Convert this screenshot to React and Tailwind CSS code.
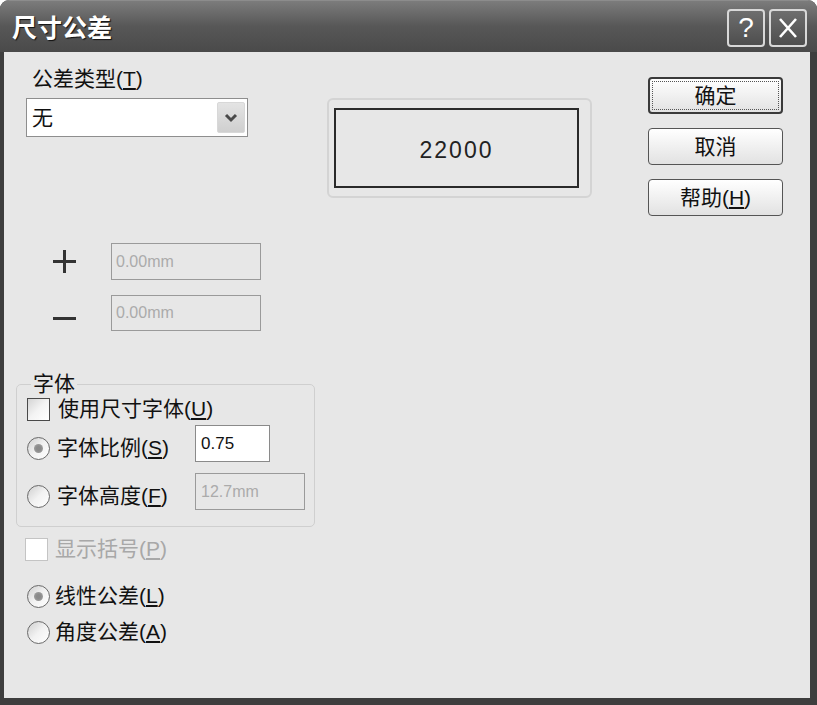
import React from "react";

const FONT = { fontFamily: '"Liberation Sans", "Noto Sans CJK SC", sans-serif' };

function Radio({ checked }) {
  return (
    <span className="flex items-center justify-center w-[23px] h-[23px] rounded-full border border-[#6a6a6a] bg-linear-to-br from-[#cfcfcf] via-[#f2f2f2] to-white shrink-0">
      {checked && <span className="block w-[9px] h-[9px] rounded-full bg-[radial-gradient(circle,#8a8a8a_30%,#a8a8a8_100%)]" />}
    </span>
  );
}

function Check({ disabled }) {
  return (
    <span
      className={
        disabled
          ? "block w-[23px] h-[23px] border border-[#c4c4c4] bg-white shrink-0"
          : "block w-[23px] h-[23px] border border-[#4a4a4a] bg-linear-to-br from-[#d4d4d4] via-[#f4f4f4] to-white shrink-0"
      }
    />
  );
}

function Btn({ children, def }) {
  return (
    <div
      className={
        def
          ? "h-[37px] rounded-[4px] border-2 border-[#3a3a3a] bg-linear-to-b from-white to-[#e2e2e2] p-[2px]"
          : "h-[37px] rounded-[4px] border border-[#555] bg-linear-to-b from-white to-[#e2e2e2] flex items-center justify-center text-[21px] text-[#111]"
      }
    >
      {def ? (
        <div className="h-full border border-dotted border-[#555] flex items-center justify-center text-[21px] text-[#111]">
          {children}
        </div>
      ) : (
        children
      )}
    </div>
  );
}

export default function App() {
  return (
    <div className="w-[817px] h-[705px] bg-white" style={FONT}>
      <div className="flex flex-col h-full rounded-t-[9px] bg-[#3e3e3e] overflow-hidden">
        {/* title bar */}
        <div className="h-[52px] shrink-0 flex items-start bg-linear-to-b from-[#7c7c7c] via-[#575757] to-[#4a4a4a] border-t border-[#8c8c8c]">
          <div className="pl-[12px] pt-[12px] text-[25px] leading-[30px] font-bold text-white [text-shadow:1px_1px_1px_#111]">
            尺寸公差
          </div>
          <div className="ml-auto mr-[10px] mt-[8px] flex gap-[4px]">
            <div className="w-[38px] h-[38px] rounded-[4px] border-2 border-[#d8d8d8] bg-linear-to-b from-[#6e6e6e] to-[#4e4e4e] flex items-center justify-center text-white text-[28px] leading-none">
              ?
            </div>
            <div className="w-[38px] h-[38px] rounded-[4px] border-2 border-[#d8d8d8] bg-linear-to-b from-[#6e6e6e] to-[#4e4e4e] flex items-center justify-center">
              <svg width="20" height="22" viewBox="0 0 20 22">
                <path d="M2 2 L18 20 M18 2 L2 20" stroke="white" strokeWidth="2.6" fill="none" />
              </svg>
            </div>
          </div>
        </div>

        {/* body */}
        <div className="flex-1 ml-[4px] mr-[7px] mb-[7px] bg-[#e7e7e7] flex items-start text-[#111]">
          {/* left column */}
          <div className="ml-[12px] w-[300px] flex flex-col items-start">
            <div className="mt-[15px] ml-[16px] h-[24px] leading-[24px] text-[21px]">
              公差类型(<u>T</u>)
            </div>
            <div className="mt-[7px] ml-[10px] w-[222px] h-[39px] border border-[#8e8e8e] bg-white flex items-center">
              <span className="ml-[5px] text-[21px] leading-[24px]">无</span>
              <span className="ml-auto mr-[2px] w-[28px] h-[31px] rounded-[2px] bg-linear-to-b from-[#e4e4e4] to-[#cfcfcf] border border-[#d8d8d8] flex items-center justify-center">
                <svg width="14" height="10" viewBox="0 0 14 10">
                  <polyline points="2,2 7,7 12,2" stroke="#4a4a4a" strokeWidth="3" fill="none" />
                </svg>
              </span>
            </div>

            <div className="mt-[106px] flex items-center h-[37px]">
              <span className="ml-[37px] relative w-[23px] h-[23px]">
                <span className="absolute left-0 top-[10px] w-[23px] h-[3px] bg-[#333]" />
                <span className="absolute left-[10px] top-0 w-[3px] h-[23px] bg-[#333]" />
              </span>
              <div className="ml-[35px] w-[150px] h-[37px] border border-[#9a9a9a] flex items-center pl-[4px] text-[16px] text-[#ababab]">
                0.00mm
              </div>
            </div>
            <div className="mt-[15px] flex items-center h-[36px]">
              <span className="ml-[37px] mt-[10px] block w-[23px] h-[3px] bg-[#333]" />
              <div className="ml-[35px] w-[150px] h-[36px] border border-[#9a9a9a] flex items-center pl-[4px] text-[16px] text-[#ababab]">
                0.00mm
              </div>
            </div>

            <fieldset className="mt-[41px] w-[299px] border border-[#cfcfcf] rounded-[5px] pl-[10px] pb-[16px]">
              <legend className="ml-[4px] px-[2px] h-[24px] leading-[24px] text-[21px]">字体</legend>
              <div className="mt-[1px] h-[24px] flex items-center">
                <Check />
                <span className="ml-[8px] text-[21px] leading-[24px]">
                  使用尺寸字体(<u>U</u>)
                </span>
              </div>
              <div className="mt-[4px] flex items-start">
                <div className="w-[168px] h-[24px] mt-[11px] flex items-center">
                  <Radio checked />
                  <span className="ml-[7px] text-[21px] leading-[24px]">
                    字体比例(<u>S</u>)
                  </span>
                </div>
                <div className="w-[75px] h-[37px] border border-[#8a8a8a] bg-white flex items-center pl-[5px] text-[17px] text-[#111]">
                  0.75
                </div>
              </div>
              <div className="mt-[11px] flex items-start">
                <div className="w-[168px] h-[24px] mt-[11px] flex items-center">
                  <Radio />
                  <span className="ml-[7px] text-[21px] leading-[24px]">
                    字体高度(<u>F</u>)
                  </span>
                </div>
                <div className="w-[110px] h-[37px] border border-[#9a9a9a] flex items-center pl-[5px] text-[16px] text-[#ababab]">
                  12.7mm
                </div>
              </div>
            </fieldset>

            <div className="mt-[10px] ml-[9px] h-[24px] flex items-center">
              <Check disabled />
              <span className="ml-[7px] text-[21px] leading-[24px] text-[#a8a8a8]">
                显示括号(<u>P</u>)
              </span>
            </div>
            <div className="mt-[23px] ml-[11px] h-[24px] flex items-center">
              <Radio checked />
              <span className="ml-[5px] text-[21px] leading-[24px]">
                线性公差(<u>L</u>)
              </span>
            </div>
            <div className="mt-[12px] ml-[11px] h-[24px] flex items-center">
              <Radio />
              <span className="ml-[5px] text-[21px] leading-[24px]">
                角度公差(<u>A</u>)
              </span>
            </div>
          </div>

          {/* preview */}
          <div className="ml-[11px] mt-[46px] w-[265px] h-[100px] rounded-[6px] border-2 border-[#d4d4d4] flex flex-col items-start">
            <div className="mt-[8px] ml-[5px] w-[245px] h-[80px] border-2 border-[#2a2a2a] flex items-center justify-center">
              <span className="mt-[4px] text-[23px] tracking-[2px] text-[#222] font-light">22000</span>
            </div>
          </div>

          {/* buttons */}
          <div className="ml-[56px] mt-[25px] w-[135px] flex flex-col gap-[14px]">
            <Btn def>确定</Btn>
            <Btn>取消</Btn>
            <Btn>
              <span>
                帮助(<u>H</u>)
              </span>
            </Btn>
          </div>
        </div>
      </div>
    </div>
  );
}
